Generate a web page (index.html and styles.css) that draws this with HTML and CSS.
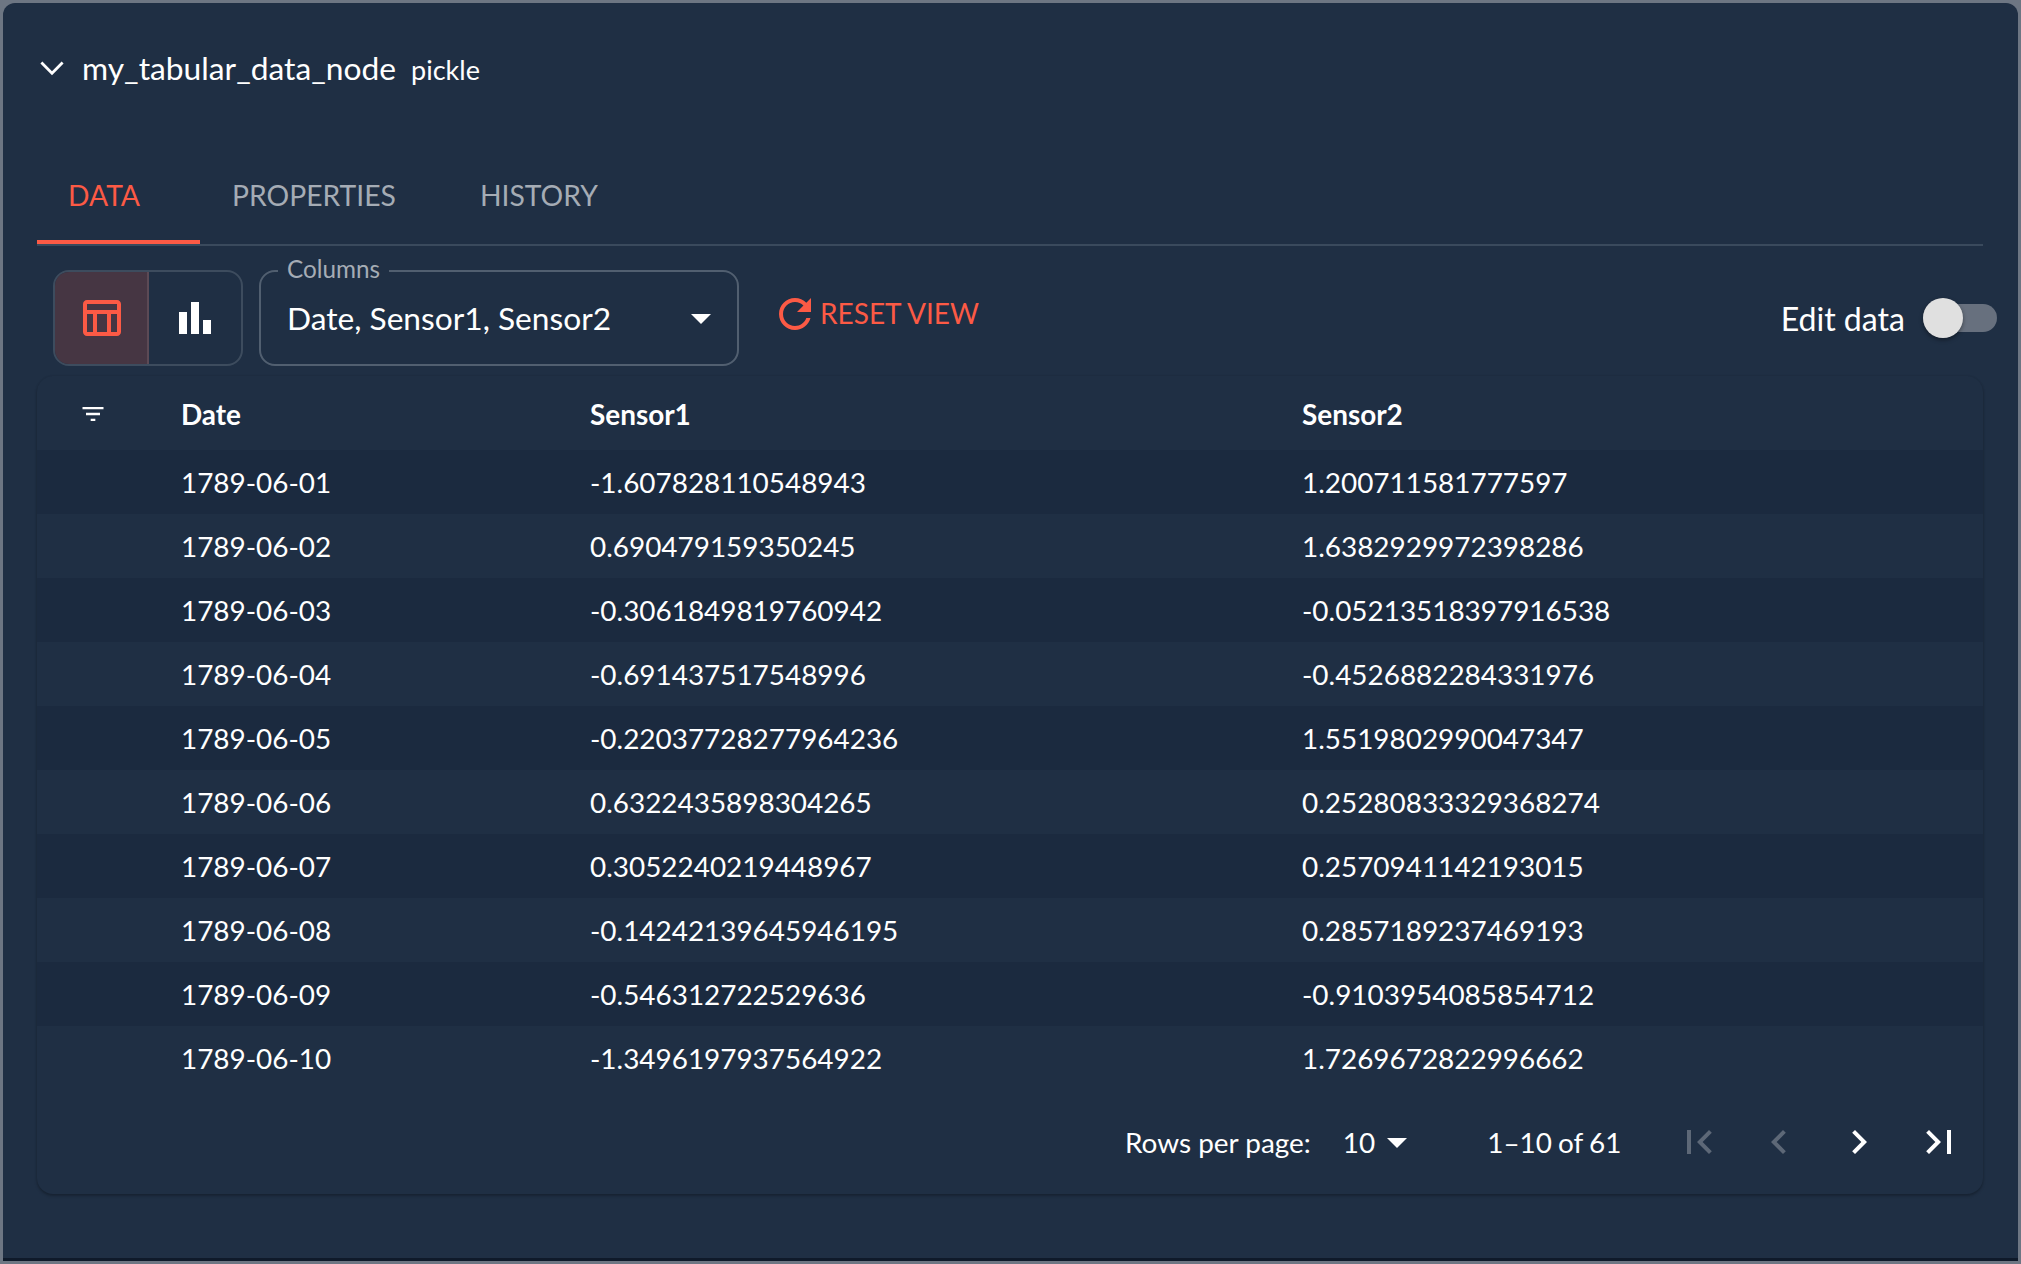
FILE: index.html
```html
<!DOCTYPE html>
<html>
<head>
    <title>my_tabular_data_node</title>
    <link rel="stylesheet" href="styles.css">
</head>
<body>
    <div class="node">
        <div class="node-head">
            <svg class="icon-48 chevron" viewBox="0 0 24 24"><path d="M6.7 9.3L12 14.6l5.3-5.3"/></svg>
            <span class="node-name">my_tabular_data_node</span>
            <span class="node-type">pickle</span>
        </div>

        <div class="tabs">
            <div class="tab tab-active">DATA</div>
            <div class="tab">PROPERTIES</div>
            <div class="tab tab-last">HISTORY</div>
        </div>

        <div class="toolbar">
            <div class="view-toggle">
                <div class="view-btn view-btn-active">
                    <svg class="icon-48" viewBox="0 0 24 24"><path d="M20 3H5c-1.1 0-2 .9-2 2v14c0 1.1.9 2 2 2h15c1.1 0 2-.9 2-2V5c0-1.1-.9-2-2-2zm0 2v3H5V5h15zm-5 14h-5v-9h5v9zM5 10h3v9H5v-9zm12 9v-9h3v9h-3z"/></svg>
                </div>
                <div class="view-btn">
                    <svg class="icon-48" viewBox="0 0 24 24"><path d="M4 9h4v11H4zM16 13h4v7h-4zM10 4h4v16h-4z"/></svg>
                </div>
            </div>

            <div class="columns-field">
                <span class="columns-label">Columns</span>
                <span class="columns-value">Date, Sensor1, Sensor2</span>
                <svg class="icon-48 columns-caret" viewBox="0 0 24 24"><path d="M7 10l5 5 5-5z"/></svg>
            </div>

            <div class="reset-btn">
                <svg class="icon-48" viewBox="0 0 24 24"><path d="M17.65 6.35C16.2 4.9 14.21 4 12 4c-4.42 0-7.99 3.58-7.99 8s3.57 8 7.99 8c3.73 0 6.84-2.55 7.73-6h-2.08c-.82 2.33-3.04 4-5.65 4-3.31 0-6-2.69-6-6s2.69-6 6-6c1.66 0 3.14.69 4.22 1.78L13 11h7V4l-2.35 2.35z"/></svg>
                <span>RESET VIEW</span>
            </div>

            <div class="edit-data">
                <span>Edit data</span>
                <div class="switch"><div class="switch-thumb"></div></div>
            </div>
        </div>

        <div class="paper">
            <table class="data-table">
                <colgroup>
                    <col class="col-filter">
                    <col class="col-date">
                    <col class="col-sensor1">
                    <col>
                </colgroup>
                <thead>
                    <tr>
                        <th><svg class="icon-28" viewBox="0 0 24 24"><path d="M10 18h4v-2h-4v2zM3 6v2h18V6H3zm3 7h12v-2H6v2z"/></svg></th>
                        <th>Date</th>
                        <th>Sensor1</th>
                        <th>Sensor2</th>
                    </tr>
                </thead>
                <tbody>
                    <tr><td></td><td>1789-06-01</td><td>-1.607828110548943</td><td>1.200711581777597</td></tr>
                    <tr><td></td><td>1789-06-02</td><td>0.690479159350245</td><td>1.6382929972398286</td></tr>
                    <tr><td></td><td>1789-06-03</td><td>-0.3061849819760942</td><td>-0.05213518397916538</td></tr>
                    <tr><td></td><td>1789-06-04</td><td>-0.691437517548996</td><td>-0.4526882284331976</td></tr>
                    <tr><td></td><td>1789-06-05</td><td>-0.22037728277964236</td><td>1.5519802990047347</td></tr>
                    <tr><td></td><td>1789-06-06</td><td>0.6322435898304265</td><td>0.25280833329368274</td></tr>
                    <tr><td></td><td>1789-06-07</td><td>0.3052240219448967</td><td>0.2570941142193015</td></tr>
                    <tr><td></td><td>1789-06-08</td><td>-0.14242139645946195</td><td>0.2857189237469193</td></tr>
                    <tr><td></td><td>1789-06-09</td><td>-0.546312722529636</td><td>-0.9103954085854712</td></tr>
                    <tr><td></td><td>1789-06-10</td><td>-1.3496197937564922</td><td>1.7269672822996662</td></tr>
                </tbody>
            </table>

            <div class="pager">
                <span>Rows per page:</span>
                <div class="pager-size">
                    <span>10</span>
                    <svg class="icon-48" viewBox="0 0 24 24"><path d="M7 10l5 5 5-5z"/></svg>
                </div>
                <span class="pager-count">1–10 of 61</span>
                <div class="pager-btns">
                    <svg class="icon-48 disabled" viewBox="0 0 24 24"><path d="M18.41 16.59L13.82 12l4.59-4.59L17 6l-6 6 6 6zM6 6h2v12H6z"/></svg>
                    <svg class="icon-48 disabled" viewBox="0 0 24 24"><path d="M15.41 7.41L14 6l-6 6 6 6 1.41-1.41L10.83 12z"/></svg>
                    <svg class="icon-48" viewBox="0 0 24 24"><path d="M10 6L8.59 7.41 13.17 12l-4.58 4.59L10 18l6-6z"/></svg>
                    <svg class="icon-48" viewBox="0 0 24 24"><path d="M5.59 7.41L10.18 12l-4.59 4.59L7 18l6-6-6-6zM16 6h2v12h-2z"/></svg>
                </div>
            </div>
        </div>
    </div>
</body>
</html>
```

FILE: styles.css
```css
* {
    box-sizing: border-box;
}

body {
    margin: 0;
    height: 1264px;
    padding: 3px;
    background-color: #6d7683;
    font-family: Lato, "Open Sans", sans-serif;
    color: #fff;
    overflow: hidden;
}

svg {
    display: block;
    fill: currentColor;
    flex-shrink: 0;
}

.icon-48 {
    width: 48px;
    height: 48px;
}

.icon-28 {
    width: 28px;
    height: 28px;
}

.node {
    height: 1258px;
    padding: 0 35px 0 34px;
    background-color: #1f2f44;
    border-radius: 12px 12px 0 0;
    border-bottom: 3px solid #0f1a2a;
}

.node-head {
    display: flex;
    align-items: center;
    height: 134px;
    padding-bottom: 4px;
    margin-left: -9px;
}

.chevron {
    fill: none;
    stroke: currentColor;
    stroke-width: 1.4;
}

.node-name {
    font-size: 31.75px;
    margin-left: 6px;
}

.node-type {
    font-size: 27px;
    margin-left: 15px;
    margin-top: 3px;
}

.tabs {
    display: flex;
    height: 109px;
    border-bottom: 2px solid #3a4a5d;
}

.tab {
    height: 107px;
    padding: 16px 32px 0;
    line-height: 85px;
    font-size: 28.3px;
    color: #a5acb5;
}

.tab-active {
    width: 163px;
    padding-left: 31px;
    color: #fc5a45;
    border-bottom: 4px solid #fc5a45;
}

.tab-last {
    margin-left: 20px;
}

.toolbar {
    display: flex;
    align-items: center;
    height: 96px;
    margin-top: 24px;
    padding-left: 16px;
}

.view-toggle {
    display: flex;
    width: 190px;
    height: 96px;
    border: 2px solid #3d4c5e;
    border-radius: 16px;
    overflow: hidden;
}

.view-btn {
    display: flex;
    align-items: center;
    justify-content: center;
    flex: 1;
}

.view-btn-active {
    flex: none;
    width: 94px;
    color: #fc5a45;
    background-color: #463643;
    border-right: 2px solid #5c4a55;
}

.columns-field {
    position: relative;
    display: flex;
    align-items: center;
    justify-content: space-between;
    width: 480px;
    height: 96px;
    margin-left: 16px;
    padding: 0 12px 0 26px;
    border: 2px solid #515f70;
    border-radius: 16px;
}

.columns-label {
    position: absolute;
    top: -15px;
    left: 17px;
    padding: 0 9px;
    font-size: 24.3px;
    line-height: 24px;
    color: #a5acb5;
    background-color: #1f2f44;
}

.columns-value {
    font-size: 31.7px;
    margin-top: -1px;
}

.reset-btn {
    display: flex;
    align-items: center;
    margin-left: 32px;
    margin-top: -8px;
    font-size: 28px;
    color: #fc5a45;
}

.reset-btn span {
    margin-left: 1px;
    margin-top: -2px;
}

.edit-data {
    display: flex;
    align-items: center;
    margin-left: auto;
    margin-right: -14px;
    font-size: 32.1px;
}

.switch {
    position: relative;
    width: 74px;
    height: 28px;
    margin-left: 18px;
    background-color: #67707e;
    border-radius: 14px;
}

.switch-thumb {
    position: absolute;
    top: -6px;
    left: 0;
    width: 40px;
    height: 40px;
    background-color: #e0e0e0;
    border-radius: 50%;
    box-shadow: 0 2px 4px rgba(0, 0, 0, 0.4);
}

.paper {
    margin-top: 10px;
    height: 818px;
    border-radius: 16px;
    box-shadow: 0 2px 3px rgba(0, 0, 0, 0.25), 0 0 2px rgba(0, 0, 0, 0.12);
    overflow: hidden;
}

.data-table {
    width: 100%;
    border-collapse: collapse;
    table-layout: fixed;
    font-size: 27.92px;
}

.col-filter {
    width: 144px;
}

.col-date {
    width: 409px;
}

.col-sensor1 {
    width: 712px;
}

th {
    height: 74px;
    padding: 2px 0 0;
    text-align: left;
    font-weight: 700;
}

th svg {
    margin-left: 42px;
    margin-top: 0;
}

td {
    height: 64px;
    padding: 0;
}

tbody tr:nth-child(odd) {
    background-color: #1b2a3f;
}

.pager {
    display: flex;
    align-items: center;
    height: 103px;
    padding-left: 1088px;
    font-size: 27.92px;
}

.pager-size {
    display: flex;
    align-items: center;
    margin-left: 32px;
}

.pager-size svg {
    margin-left: -2px;
}

.pager-count {
    margin-left: 66px;
    word-spacing: -1px;
}

.pager-btns {
    display: flex;
    gap: 32px;
    margin-left: 54px;
}

.disabled {
    color: #5d6877;
}
```
